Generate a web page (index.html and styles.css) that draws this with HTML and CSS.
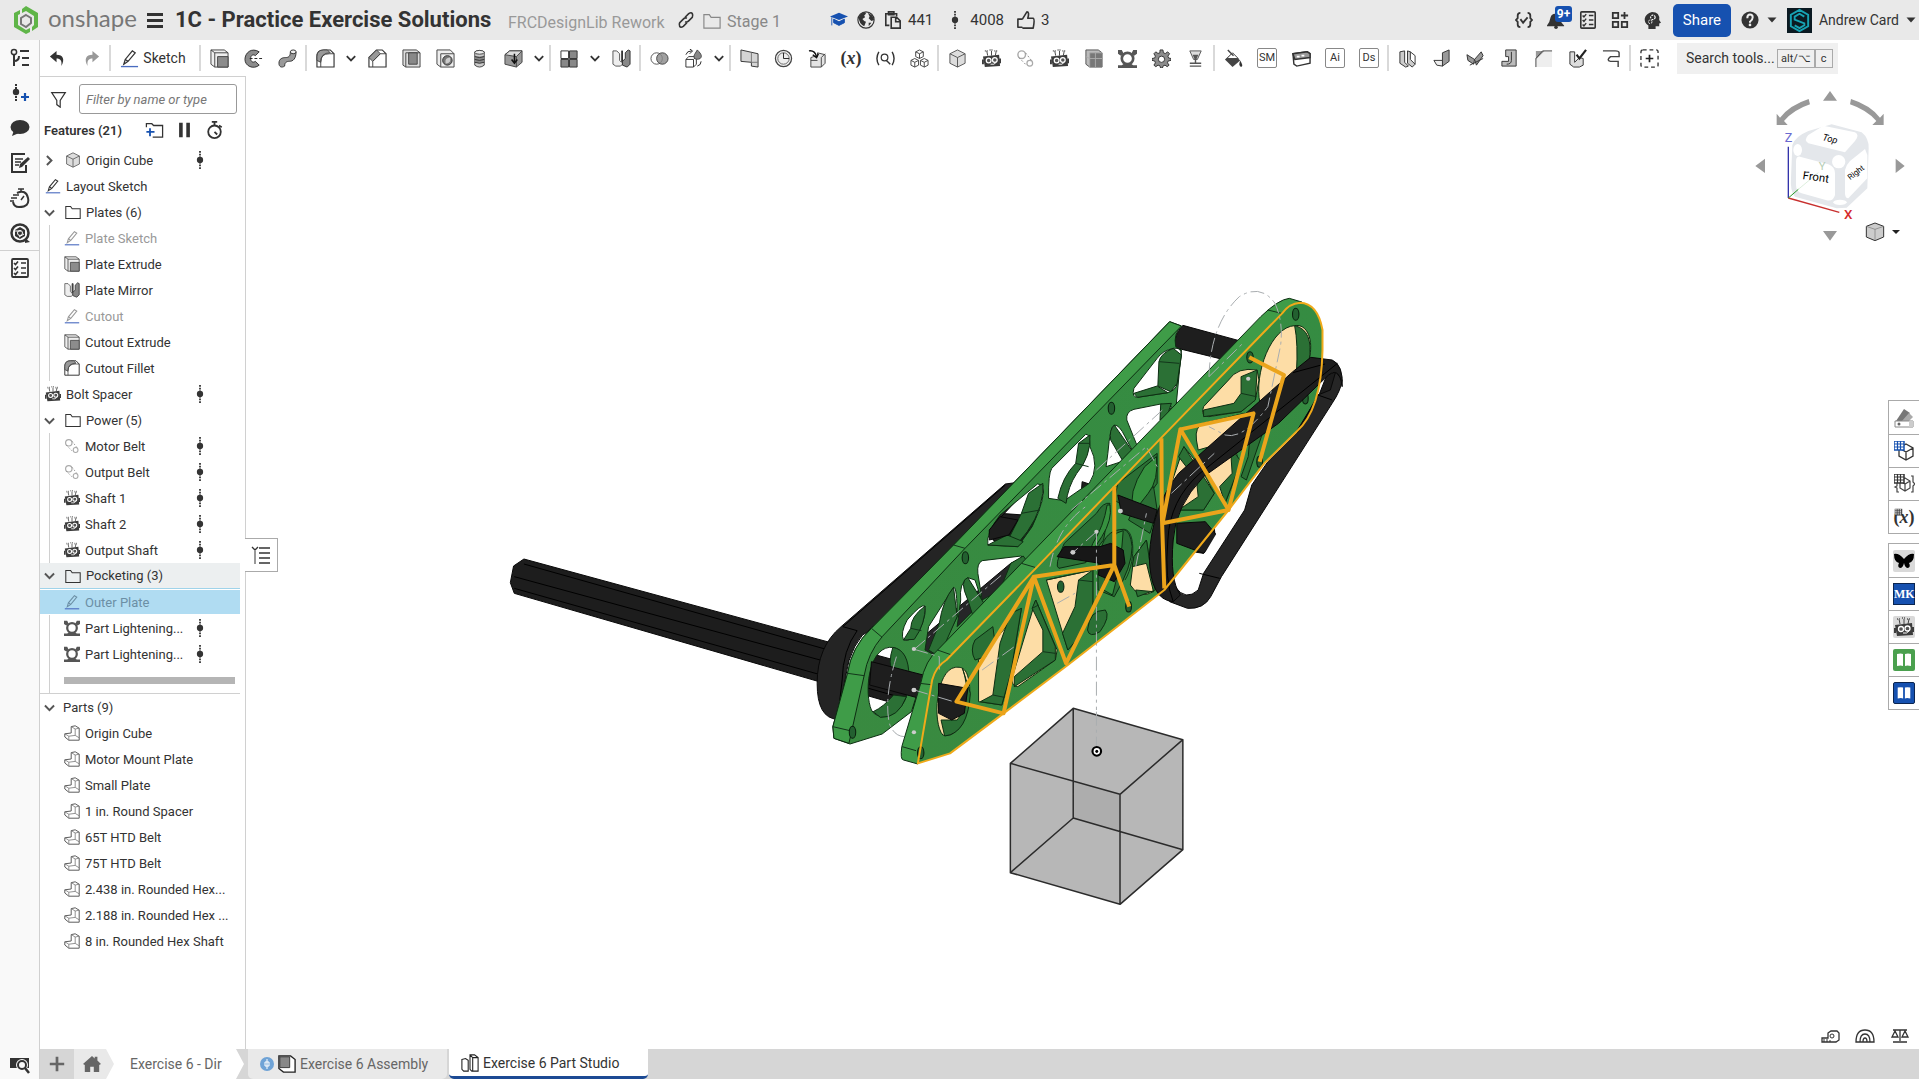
FILE: index.html
```
<!DOCTYPE html>
<html lang="en">
<head>
    <meta charset="UTF-8">
    <meta name="viewport" content="width=device-width, initial-scale=1.0">
    <title>1C - Practice Exercise Solutions</title>
    <link rel="stylesheet" href="styles.css">
</head>
<body>
    <!-- icon set, all on a 20x20 grid -->
    <svg class="sprite" aria-hidden="true">
        <symbol id="undo" viewBox="0 0 20 20"><path d="M9 2 2 8l7 6v-4c4 0 6 2 5 8 4-7 2-12-5-12z" fill="currentColor"/></symbol>
        <symbol id="redo" viewBox="0 0 20 20"><path d="m11 2 7 6-7 6v-4c-4 0-6 2-5 8-4-7-2-12 5-12z" fill="currentColor"/></symbol>
        <symbol id="pencil" viewBox="0 0 20 20"><path d="m4 16 1.500-5L13 2l3 2-7.500 9z M5.500 11l3 2" fill="none" stroke="currentColor" stroke-width="1.300"/><path d="M1 18.500h18" stroke="#4a6cc0" stroke-width="1.400"/></symbol>
        <symbol id="extrude" viewBox="0 0 20 20"><path d="M1 1h14l4 3v15H5l-4-3z" fill="#eee" stroke="#444"/><path d="M5 4h14M5 4v15M1 1l4 3" stroke="#444" fill="none"/><path d="M8 8h11v11H8z" fill="#8c8c8c" stroke="#444"/></symbol>
        <symbol id="revolve" viewBox="0 0 20 20"><path d="M16 3C8-2 1 4 1 11s9 11 15 6l-4-4c-3 2-5 0-5-3s2-5 5-3z" fill="#8c8c8c" stroke="#333"/><path d="M6 10h13" stroke="#222" stroke-dasharray="3 2"/></symbol>
        <symbol id="sweep" viewBox="0 0 20 20"><path d="M1 15c0-5 4-6 7-6s5-1 5-6h6c0 7-3 10-7 10-3 0-5 1-5 5-3 2-6 1-6-3z" fill="#999" stroke="#333"/><ellipse cx="16" cy="3" rx="3" ry="2" fill="#eee" stroke="#333"/></symbol>
        <symbol id="fillet" viewBox="0 0 20 20"><path d="M1 19V8q0-7 7-7h7l4 4v14H5z" fill="#fff" stroke="#333" stroke-width="1.200"/><path d="M1 8q0-7 7-7h4l3 3q-10 0-10 10l-4-2z" fill="#999" stroke="#444"/><path d="M5 19v-6q0-8 9-8h5" fill="none" stroke="#444"/></symbol>
        <symbol id="chamfer" viewBox="0 0 20 20"><path d="M1 19V9l8-8h6l4 4v14H5z" fill="#fff" stroke="#333" stroke-width="1.200"/><path d="m1 9 8-8 4 4-8 8z" fill="#999" stroke="#444"/><path d="M5 19v-6l8-8h6" fill="none" stroke="#444"/></symbol>
        <symbol id="shell" viewBox="0 0 20 20"><path d="M1 1h14l4 3v15H4l-3-2z" fill="#ddd" stroke="#444"/><path d="M4 4h15M4 4v15" stroke="#444"/><path d="M7 4h9v12H7z" fill="#888" stroke="#444"/></symbol>
        <symbol id="hole" viewBox="0 0 20 20"><path d="M1 1h14l4 4v14H5l-4-3z" fill="#eee" stroke="#444"/><path d="M5 5h14M5 5v14" stroke="#444"/><circle cx="12" cy="12" r="5" fill="#777" stroke="#333"/><path d="M10 12q1-3 5-3v4q-2 3-5 2z" fill="#ccc"/></symbol>
        <symbol id="thread" viewBox="0 0 20 20"><path d="M5 3v14q5 4 10 0V3q-5-3-10 0z" fill="#ccc" stroke="#444"/><path d="M5 7q5 2 10 0v7q-5 2-10 0z" fill="#888"/><ellipse cx="10" cy="3.500" rx="5" ry="2" fill="#eee" stroke="#444"/><path d="M5 8q5 2 10 0M5 11q5 2 10 0M5 14q5 2 10 0" fill="none" stroke="#333"/></symbol>
        <symbol id="import" viewBox="0 0 20 20"><path d="m1 6 5-4h13v12l-6 5-12-3z" fill="#999" stroke="#444"/><path d="m1 6 5-4h13l-6 6z" fill="#ddd" stroke="#444"/><path d="M13 8v11" stroke="#444"/><path d="M11 5v9m-3-3 3 4 3-4" fill="none" stroke="#111" stroke-width="1.600"/></symbol>
        <symbol id="pattern" viewBox="0 0 20 20"><path d="M1 2h8v8H1z" fill="#fff" stroke="#333"/><path d="M10 2h8v8h-8zM1 11h8v8H1zM10 11h8v8h-8z" fill="#888" stroke="#333"/></symbol>
        <symbol id="mirror" viewBox="0 0 20 20"><path d="M1 2h4l3 3v7l2 2V2h1v14l-2 2H4l-3-2z" fill="#eee" stroke="#555"/><path d="M11 2v11l3-3V4l3-3 2 1v14l-3 3-5-2z" fill="#888" stroke="#333"/></symbol>
        <symbol id="boolean" viewBox="0 0 20 20"><circle cx="7" cy="10" r="6" fill="#fff" stroke="#555"/><circle cx="13" cy="10" r="6" fill="#888" fill-opacity=".8" stroke="#444"/></symbol>
        <symbol id="transform" viewBox="0 0 20 20"><path d="M2 11h8v8H2zm0 0 3-3h8l-3 3M13 8v8l-3 3" fill="#fff" stroke="#333"/><path d="M14 1c5 5 5 7 3 9-4 2-8 0-6-4z" fill="#888" stroke="#444"/><path d="M2 6q1-4 6-4M6 0l3 2-3 3M18 13q0 4-4 5" fill="none" stroke="#222"/></symbol>
        <symbol id="plane" viewBox="0 0 20 20"><path d="m1 1 18 4v14l-7-1v-4L1 13z" fill="#d5d5d5" stroke="#333"/><path d="M12 4v10h7" fill="none" stroke="#777"/></symbol>
        <symbol id="clock" viewBox="0 0 20 20"><circle cx="10" cy="10" r="8.500" fill="#eee" stroke="#444" stroke-width="1.300"/><circle cx="10" cy="10" r="6" fill="none" stroke="#666"/><path d="M10 4v6h6" fill="none" stroke="#222"/></symbol>
        <symbol id="derive" viewBox="0 0 20 20"><path d="M6 8h4V4l8 2v9l-4 4H3V9z" fill="#e4e4e4" stroke="#444"/><path d="M14 19V9l4-4M3 12h7" stroke="#444" fill="none"/><path d="M1 2q6-1 8 6m-4-2 4 3 2-4" fill="none" stroke="#111" stroke-width="1.500"/></symbol>
        <symbol id="lens" viewBox="0 0 20 20"><path d="M3 3q-4 7 0 14M17 3q4 7 0 14" fill="none" stroke="#333" stroke-width="1.500"/><circle cx="9" cy="9" r="3.500" fill="none" stroke="#333" stroke-width="1.300"/><path d="m11 12 4 4" stroke="#333" stroke-width="1.500"/></symbol>
        <symbol id="cubes" viewBox="0 0 20 20"><path d="m10 1 4 2v5l-4 2-4-2V3zM5 10l4 2v5l-4 2-4-2v-5zM15 10l4 2v5l-4 2-4-2v-5zM6 3l4 2 4-2M10 5v5M1 12l4 2 4-2M5 14v5M11 12l4 2 4-2M15 14v5" fill="none" stroke="#444"/></symbol>
        <symbol id="cube" viewBox="0 0 20 20"><path d="m10 1 8 4v10l-8 4-8-4V5z" fill="#ddd" stroke="#555"/><path d="m2 5 8 4 8-4M10 9v10" fill="none" stroke="#555"/></symbol>
        <symbol id="robot" viewBox="0 0 20 20"><path d="M1 8 18 6l1 12L3 19z" fill="#3c3c3c"/><path d="M0 11h2v5H0zM18 10h2v5h-2z" fill="#3c3c3c"/><path d="M10 2v5M5 2l1 5M15 2l-1 5" stroke="#444"/><path d="M3 2h4M8 1h4M13 2h4" stroke="#777" stroke-dasharray="1 1" stroke-width="2"/><circle cx="7" cy="12" r="2.500" fill="#555" stroke="#fff" stroke-width="1.300"/><circle cx="13.500" cy="11.500" r="2.500" fill="#555" stroke="#fff" stroke-width="1.300"/><path d="M9 16q4 1 6-2" fill="none" stroke="#fff"/></symbol>
        <symbol id="belt" viewBox="0 0 20 20"><circle cx="6" cy="6" r="4" fill="none" stroke="#aaa" stroke-width="1.500"/><circle cx="14.500" cy="15" r="3" fill="none" stroke="#aaa" stroke-width="1.300"/><path d="m10 4 7 9M3 9l8 8" stroke="#888" stroke-dasharray="2 2"/></symbol>
        <symbol id="tube" viewBox="0 0 20 20"><path d="M2 1h13l4 3v15H6l-4-3z" fill="#bbb" stroke="#555"/><path d="M6 4h13v15H6z" fill="#777"/><path d="M6 4h13M6 4v15M2 8l4 2h13M12 4v15" stroke="#aaa" fill="none"/></symbol>
        <symbol id="lighten" viewBox="0 0 20 20"><path d="M0 1h4l2 4-3 2-3-2zM20 1h-4l-2 4 3 2 3-2zM0 20v-3h4l3-2h6l3 2h4v3z" fill="#555"/><circle cx="10" cy="10" r="6" fill="#fff" stroke="#555" stroke-width="2.800"/></symbol>
        <symbol id="gear" viewBox="0 0 20 20"><path d="M8.500 1h3l.5 3 2 .8L16.500 3l2 2-1.800 2.500.8 2 2.500.5v2l-3 .6-.7 2L18 17l-2 1.600-2.300-1.600-2 .8L11 20H9l-.6-2.300-2-.7L4 18.600 2 17l1.600-2.400-.8-2L0 12v-2l2.800-.5.8-2L2 5l2-2 2.300 1.700 2-.7z" fill="#8c8c8c" stroke="#333"/><circle cx="10" cy="10.800" r="3.300" fill="#fff" stroke="#333"/></symbol>
        <symbol id="goblet" viewBox="0 0 20 20"><path d="M4 2h12l-4 9H8z" fill="#ddd" stroke="#555"/><path d="M7 6h6l-3 7z" fill="#555"/><path d="M10 10v5M4 15h12M4 18h12" stroke="#555" stroke-width="1.500"/></symbol>
        <symbol id="paint" viewBox="0 0 20 20"><path d="m1 11 8-7 8 8-8 7z" fill="#444"/><path d="m3 10 6-6 6 6z" fill="#fff" stroke="#444"/><path d="m4 1 6 6" stroke="#444" stroke-width="1.500"/><path d="M17 12q4 6 1 7-3-1-1-7" fill="#333"/></symbol>
        <symbol id="card" viewBox="0 0 20 20"><path d="m1 5 15-2 3 2v10l-14 3-3-2z" fill="#fff" stroke="#333" stroke-width="1.500"/><path d="m1 5 15-2 3 2v4L3 11z" fill="#999" stroke="#333" stroke-width="1.500"/><path d="M5 8h3M10 7h3" stroke="#fff" stroke-width="2"/></symbol>
        <symbol id="sheet1" viewBox="0 0 20 20"><path d="m2 3 5-1v12l4 4-3 1-6-4zM10 2l3 1v8l5 5-3 3-5-4z" fill="#ccc" stroke="#333"/><path d="m13 3 5 4v9" fill="none" stroke="#333"/></symbol>
        <symbol id="sheet2" viewBox="0 0 20 20"><path d="m11 4 7-3v12l-7 5z" fill="#999" stroke="#333"/><path d="m2 12 9 0v6L5 17z" fill="#eee" stroke="#333"/></symbol>
        <symbol id="sheet3" viewBox="0 0 20 20"><path d="m1 6 8 5-1 5-6-4zM9 11l7-8 2 4-7 10z" fill="#999" stroke="#333"/><path d="m4 17 14-7" stroke="#333"/></symbol>
        <symbol id="sheet4" viewBox="0 0 20 20"><path d="M6 1h11v17H2v-5h7V8H6z" fill="#bbb" stroke="#333"/><path d="M12 3v9q0 4-5 4" fill="none" stroke="#333"/></symbol>
        <symbol id="sheet5" viewBox="0 0 20 20"><path d="M2 19V9l7-7h10v17z" fill="#eee"/><path d="M2 2h9l-9 9z" fill="#999"/><path d="M2 19V10l7-8h10" fill="none" stroke="#444"/></symbol>
        <symbol id="sheet6" viewBox="0 0 20 20"><path d="M2 3l5 0v11l5-5 4 1v7l-4 2H6l-4-3z" fill="#ddd" stroke="#333"/><path d="m9 6 3 4 7-9" fill="none" stroke="#222" stroke-width="2.300"/></symbol>
        <symbol id="sheet7" viewBox="0 0 20 20"><path d="M1 2h13q4 0 4 2v4H9q-5 4 0 5h8v6" fill="none" stroke="#444" stroke-width="1.500"/></symbol>
        <symbol id="custom" viewBox="0 0 20 20"><rect x="1" y="1" width="18" height="18" rx="2" fill="none" stroke="#333" stroke-width="1.400" stroke-dasharray="4 3"/><path d="M10 6v8M6 10h8" stroke="#222" stroke-width="1.800"/></symbol>
        <symbol id="down" viewBox="0 0 20 20"><path d="m3 7 7 7 7-7" fill="none" stroke="currentColor" stroke-width="3"/></symbol>
        <symbol id="right" viewBox="0 0 20 20"><path d="m6 3 7 7-7 7" fill="none" stroke="currentColor" stroke-width="3"/></symbol>
        <symbol id="caret" viewBox="0 0 20 20"><path d="M1 5h18l-9 10z" fill="currentColor"/></symbol>
        <symbol id="version" viewBox="0 0 20 20"><path d="M10 0v20" stroke="currentColor" stroke-width="2" stroke-dasharray="2 1"/><circle cx="10" cy="10" r="3.500" fill="currentColor"/></symbol>
        <symbol id="folder" viewBox="0 0 20 20"><path d="M1 3h6l2 3h10v12H1z" fill="none" stroke="currentColor" stroke-width="1.300"/></symbol>
        <symbol id="part" viewBox="0 0 20 20"><path d="M9 2 14 1l5 3v15H6l-5-4v-4l8-1z" fill="#fff" stroke="#555" stroke-width="1.200"/><path d="m9 2 5 3v8l-8 1-5-3M14 5l5-1M6 14v5M14 13l5 3" fill="none" stroke="#777"/></symbol>
        <symbol id="list" viewBox="0 0 20 20"><path d="M10 3h9M12 10h7M12 17h7M4 7v11M4 13q5 0 5-5" fill="none" stroke="currentColor" stroke-width="2"/><circle cx="4" cy="4" r="2.600" fill="none" stroke="currentColor" stroke-width="1.500"/></symbol>
        <symbol id="versionadd" viewBox="0 0 20 20"><path d="M6 1v17" stroke="currentColor" stroke-width="2" stroke-dasharray="2 1"/><circle cx="6" cy="9" r="3.200" fill="currentColor"/><path d="M15 10v8M11 14h8" stroke="#1651b0" stroke-width="2.200"/></symbol>
        <symbol id="comment" viewBox="0 0 20 20"><ellipse cx="10" cy="9" rx="9.500" ry="7" fill="currentColor"/><path d="m4 12-2 6 7-3z" fill="currentColor"/></symbol>
        <symbol id="note" viewBox="0 0 20 20"><path d="M15 1H2v18h14v-7" fill="none" stroke="currentColor" stroke-width="2"/><path d="M5 6h8M5 9h6M5 12h4" stroke="currentColor" stroke-width="1.600"/><path d="m9 15 1-4 8-7 2 2-8 8z" fill="currentColor"/></symbol>
        <symbol id="speed" viewBox="0 0 20 20"><path d="M7 5q9-4 11 5t-9 9q-5 0-6-5" fill="none" stroke="currentColor" stroke-width="2"/><path d="M8 1h6M11 1v3M3 7h6M1 10h6M0 13h4M11 12l3-4" stroke="currentColor" stroke-width="1.500"/></symbol>
        <symbol id="target" viewBox="0 0 20 20"><circle cx="10" cy="10" r="8.500" fill="none" stroke="currentColor" stroke-width="2.500"/><path d="m15 15 5 4-5 1z" fill="currentColor"/><path d="m10 4 5 3v6l-5 3-5-3V7z" fill="currentColor"/><circle cx="10" cy="10" r="2.500" fill="none" stroke="#fff"/><path d="M5 8h6M9 14l5-3" stroke="#fff"/></symbol>
        <symbol id="checklist" viewBox="0 0 20 20"><rect x="2" y="1" width="16" height="18" rx="1" fill="none" stroke="currentColor" stroke-width="1.800"/><path d="M11 5h5M11 10h5M11 15h5M4 5l1.500 1.500L8 3.500M4 10l1.500 1.500L8 8.500M4 15l1.500 1.500L8 13.500" fill="none" stroke="currentColor" stroke-width="1.600"/></symbol>
        <symbol id="find" viewBox="0 0 20 20"><path d="M0 3h19v10H0z" fill="currentColor"/><circle cx="12" cy="10" r="6" fill="#f9f9f9"/><circle cx="12" cy="10" r="4" fill="#f9f9f9" stroke="currentColor" stroke-width="2"/><path d="m15 13 4 5" stroke="currentColor" stroke-width="2.500"/></symbol>
        <symbol id="funnel" viewBox="0 0 20 20"><path d="M2 2h16l-6 9v8l-4-3v-5z" fill="none" stroke="currentColor" stroke-width="1.400"/></symbol>
        <symbol id="folderadd" viewBox="0 0 20 20"><path d="M1 7V3h6l2 2h10v13H8" fill="none" stroke="currentColor" stroke-width="1.400"/><path d="M5 8v9M1 12h9" stroke="#1651b0" stroke-width="2"/></symbol>
        <symbol id="pause" viewBox="0 0 20 20"><path d="M4 2h4v16H4zM12 2h4v16h-4z" fill="currentColor"/></symbol>
        <symbol id="timer" viewBox="0 0 20 20"><circle cx="10" cy="12" r="7" fill="none" stroke="currentColor" stroke-width="2"/><path d="M7 1h6M10 1v4m0 7 3 3m2-10 3 2" stroke="currentColor" stroke-width="2"/></symbol>
        <symbol id="link" viewBox="0 0 20 20"><path d="m9 7 4-4q3-2 4 0t0 4l-4 4q-2 2-4 1m2 1-4 4q-3 2-4 0t0-4l4-4q2-2 4-1" fill="none" stroke="currentColor" stroke-width="1.800"/></symbol>
        <symbol id="grad" viewBox="0 0 20 20"><path d="m10 2 10 4-10 4L0 6z" fill="currentColor"/><path d="M4 9v4l6 3 6-3V9l-6 3zM2 7v9" fill="currentColor" stroke="currentColor"/></symbol>
        <symbol id="globe" viewBox="0 0 20 20"><circle cx="10" cy="10" r="9" fill="none" stroke="currentColor" stroke-width="1.300"/><path d="M2 7q2-5 7-6l1 2-2 2 1 2-3 2 2 2 2 1-2 5Q2 14 2 7zM12 2l5 3 2 5-3 1-3-3 1-2zM13 13l3 0-3 4z" fill="currentColor"/></symbol>
        <symbol id="copy" viewBox="0 0 20 20"><path d="M6 16H2V3h12v3M5 1h6v3H5z" fill="none" stroke="currentColor" stroke-width="1.800"/><path d="M8 7h6l4 4v8H8zM13 7v5h5" fill="none" stroke="currentColor" stroke-width="1.800"/></symbol>
        <symbol id="like" viewBox="0 0 20 20"><path d="M6 9H1v9h5m0-9 5-8q3 0 1 7h6q2 1 0 11H6" fill="none" stroke="currentColor" stroke-width="1.800" stroke-linejoin="round"/></symbol>
        <symbol id="braces" viewBox="0 0 20 20"><path d="M6 2Q3 2 3 5v3l-2 2 2 2v3q0 3 3 3M14 2q3 0 3 3v3l2 2-2 2v3q0 3-3 3M6 9l3 4 5-6" fill="none" stroke="currentColor" stroke-width="2"/></symbol>
        <symbol id="bell" viewBox="0 0 20 20"><path d="M0 16q3-3 4-9 1-4 5-4t5 4q1 6 5 9v1H0z" fill="currentColor"/><circle cx="10" cy="18" r="2" fill="currentColor"/></symbol>
        <symbol id="apps" viewBox="0 0 20 20"><path d="M2 2h6v6H2zM2 12h6v6H2zM12 12h6v6h-6zM15 1v8M11 5h8" fill="none" stroke="currentColor" stroke-width="2"/></symbol>
        <symbol id="head" viewBox="0 0 20 20"><path d="M10 1q9 0 8 9l2 3-2 1v3h-4v3H6v-4Q1 13 2 8t8-7z" fill="currentColor"/><circle cx="11" cy="7" r="2.500" fill="none" stroke="#fff" stroke-width="1.300" stroke-dasharray="2 1"/><circle cx="8" cy="12" r="2" fill="none" stroke="#fff" stroke-dasharray="2 1"/></symbol>
        <symbol id="help" viewBox="0 0 20 20"><circle cx="10" cy="10" r="9.500" fill="currentColor"/><path d="M7 8q0-4 3-4t3 3-3 5v1" fill="none" stroke="#eee" stroke-width="2.200"/><circle cx="10" cy="15.500" r="1.500" fill="#eee"/></symbol>
        <symbol id="home" viewBox="0 0 20 20"><path d="M10 1 0 10l2 1v8h6v-6h4v6h6v-8l2-1-4-4V2h-3v2z" fill="currentColor"/></symbol>
        <symbol id="plus" viewBox="0 0 20 20"><path d="M10 2v16M2 10h16" stroke="currentColor" stroke-width="3"/></symbol>
        <symbol id="assembly" viewBox="0 0 20 20"><path d="M1 1h13l5 4v14H6l-5-4z" fill="#fff" stroke="#222" stroke-width="1.500"/><path d="M2 2h11v12H2z" fill="#888" stroke="#333"/></symbol>
        <symbol id="studio" viewBox="0 0 20 20"><path d="m1 6 4-1 3 2v12H3l-2-2zM10 1h5l4 3v15h-7l-2-2zM10 1l3 3v15M13 4h6" fill="#fff" stroke="#222" stroke-width="1.200"/></symbol>
        <symbol id="gridmark" viewBox="0 0 20 20"><path d="M0 0h10v9H0z" fill="#fff" stroke="currentColor" stroke-width="1.500"/><path d="M0 3h10M0 6h10M3.500 0v9M6.500 0v9" stroke="currentColor" stroke-width="1.200"/></symbol>
        <symbol id="palette" viewBox="0 0 20 20"><path d="m2 13 8-12 6 4-8 9z" fill="#777"/><path d="m8 13 7-8 4 4-5 5z" fill="#aaa"/><path d="M1 13h18v6H1z" fill="#fff" stroke="#888"/><path d="M15 13h4v6h-4z" fill="#ccc"/><circle cx="5" cy="16" r="1.500" fill="#666"/></symbol>
        <symbol id="book" viewBox="0 0 20 20"><path d="M3 4q4-1 6 0v12q-2-1-6 0zM11 4q3-1 6 0v12q-4-1-6 0z" fill="#fff"/></symbol>
        <symbol id="butterfly" viewBox="0 0 20 20"><path d="M10 8Q5 2 0 3q0 8 5 9-2 4 1 5 3 0 4-5 1 5 4 5 3-1 1-5 5-1 5-9-5-1-10 5z" fill="#000"/></symbol>
        <symbol id="tape" viewBox="0 0 20 20"><path d="M8 7l3-2h6l2 2v7l-3 2H2v-4h6z" fill="none" stroke="#333" stroke-width="1.300"/><circle cx="12" cy="10" r="2" fill="none" stroke="#333"/><path d="M4 13v3m3-3v3m3-2v2" stroke="#333"/></symbol>
        <symbol id="protractor" viewBox="0 0 20 20"><path d="M1 16q0-12 9-12t9 12zM5 16q0-8 5-8t5 8M8 16q0-4 2-4t2 4" fill="none" stroke="#333" stroke-width="1.300"/></symbol>
        <symbol id="scale" viewBox="0 0 20 20"><path d="M10 4v11M3 16h14M3 4h14M5 5l-3 6h6zM15 5l-3 6h6z" fill="none" stroke="#333" stroke-width="1.300"/></symbol>
    </svg>

    <header class="topbar">
        <a class="logo" href="#" aria-label="Home">
            <svg width="26" height="28" viewBox="0 0 26 28"><path d="M13 0 25 7v14l-6 4v-4l2-2v-9l-8-5-4 2V3zM7 4v4L5 9v10l8 5 4-2v4l-4 2L1 21V7z" fill="#5fb548"/><path d="m13 9 5 3v5l-5 4-5-3v-6z" fill="none" stroke="#777" stroke-width="2"/></svg>
            <span>onshape</span>
        </a>
        <button class="menu" aria-label="Menu"><i></i><i></i><i></i></button>
        <h1>1C - Practice Exercise Solutions</h1>
        <span class="workspace">FRCDesignLib Rework</span>
        <svg class="icon link"><use href="#link"/></svg>
        <a class="stage" href="#"><svg class="icon"><use href="#folder"/></svg>Stage 1</a>
        <div class="stats">
            <svg class="icon blue"><use href="#grad"/></svg>
            <svg class="icon"><use href="#globe"/></svg>
            <span class="stat"><svg class="icon"><use href="#copy"/></svg>441</span>
            <span class="stat"><svg class="icon"><use href="#version"/></svg>4008</span>
            <span class="stat"><svg class="icon"><use href="#like"/></svg>3</span>
        </div>
        <div class="account">
            <button aria-label="Tasks"><svg class="icon"><use href="#braces"/></svg></button>
            <button class="bell" aria-label="Notifications"><svg class="icon"><use href="#bell"/></svg><b>9+</b></button>
            <button aria-label="Checklist"><svg class="icon"><use href="#checklist"/></svg></button>
            <button aria-label="App store"><svg class="icon"><use href="#apps"/></svg></button>
            <button aria-label="Learning"><svg class="icon"><use href="#head"/></svg></button>
            <button class="share">Share</button>
            <button class="help" aria-label="Help"><svg class="icon"><use href="#help"/></svg><svg class="tiny"><use href="#caret"/></svg></button>
            <button class="user">
                <svg width="25" height="25" viewBox="0 0 26 26"><path d="M0 0h26v26H0z" fill="#0b1a22"/><path d="m13 2 9 5v12l-9 5-9-5V7zM18 9l-5-3-5 3v3l10 4v2l-5 3-5-3" fill="none" stroke="#17a3b4" stroke-width="2"/></svg>
                Andrew Card<svg class="tiny"><use href="#caret"/></svg>
            </button>
        </div>
    </header>

    <div class="app">
        <nav class="rail">
            <button aria-label="Feature list"><svg class="icon"><use href="#list"/></svg></button>
            <button aria-label="Create version"><svg class="icon"><use href="#versionadd"/></svg></button>
            <button aria-label="Comments"><svg class="icon"><use href="#comment"/></svg></button>
            <button aria-label="Notes"><svg class="icon"><use href="#note"/></svg></button>
            <button aria-label="Performance"><svg class="icon"><use href="#speed"/></svg></button>
            <button aria-label="Assistant"><svg class="icon"><use href="#target"/></svg></button>
            <button class="split" aria-label="Checks"><svg class="icon"><use href="#checklist"/></svg></button>
            <button class="last" aria-label="Find tab"><svg class="icon"><use href="#find"/></svg></button>
        </nav>

        <div class="work">
            <div class="toolbar">
                <button aria-label="Undo"><svg class="icon"><use href="#undo"/></svg></button>
                <button class="off" aria-label="Redo"><svg class="icon"><use href="#redo"/></svg></button>
                <hr>
                <button class="sketch"><svg class="icon"><use href="#pencil"/></svg>Sketch</button>
                <hr>
                <button aria-label="Extrude"><svg class="icon"><use href="#extrude"/></svg></button>
                <button aria-label="Revolve"><svg class="icon"><use href="#revolve"/></svg></button>
                <button aria-label="Sweep"><svg class="icon"><use href="#sweep"/></svg></button>
                <hr>
                <button aria-label="Fillet"><svg class="icon"><use href="#fillet"/></svg></button>
                <button class="more" aria-label="More fillets"><svg><use href="#down"/></svg></button>
                <button aria-label="Chamfer"><svg class="icon"><use href="#chamfer"/></svg></button>
                <button aria-label="Shell"><svg class="icon"><use href="#shell"/></svg></button>
                <button aria-label="Hole"><svg class="icon"><use href="#hole"/></svg></button>
                <button aria-label="Thread"><svg class="icon"><use href="#thread"/></svg></button>
                <button aria-label="Move face"><svg class="icon"><use href="#import"/></svg></button>
                <button class="more" aria-label="More faces"><svg><use href="#down"/></svg></button>
                <hr>
                <button aria-label="Pattern"><svg class="icon"><use href="#pattern"/></svg></button>
                <button class="more" aria-label="More patterns"><svg><use href="#down"/></svg></button>
                <button aria-label="Mirror"><svg class="icon"><use href="#mirror"/></svg></button>
                <hr>
                <button aria-label="Boolean"><svg class="icon"><use href="#boolean"/></svg></button>
                <button aria-label="Transform"><svg class="icon"><use href="#transform"/></svg></button>
                <button class="more" aria-label="More transforms"><svg><use href="#down"/></svg></button>
                <hr>
                <button aria-label="Plane"><svg class="icon"><use href="#plane"/></svg></button>
                <button aria-label="Helix"><svg class="icon"><use href="#clock"/></svg></button>
                <button aria-label="Derived"><svg class="icon"><use href="#derive"/></svg></button>
                <button class="variable" aria-label="Variable">(<i>x</i>)</button>
                <button aria-label="Measured variable"><svg class="icon"><use href="#lens"/></svg></button>
                <button aria-label="Composite part"><svg class="icon"><use href="#cubes"/></svg></button>
                <hr>
                <button aria-label="Origin cube"><svg class="icon"><use href="#cube"/></svg></button>
                <button aria-label="Spacer"><svg class="icon"><use href="#robot"/></svg></button>
                <button aria-label="Belt"><svg class="icon"><use href="#belt"/></svg></button>
                <button aria-label="Shaft"><svg class="icon"><use href="#robot"/></svg></button>
                <button aria-label="Tube"><svg class="icon"><use href="#tube"/></svg></button>
                <button aria-label="Part lightening"><svg class="icon"><use href="#lighten"/></svg></button>
                <button aria-label="Gear"><svg class="icon"><use href="#gear"/></svg></button>
                <button aria-label="Bore"><svg class="icon"><use href="#goblet"/></svg></button>
                <hr>
                <button aria-label="Colour"><svg class="icon"><use href="#paint"/></svg></button>
                <button class="letters"><span>SM</span></button>
                <button aria-label="Card"><svg class="icon"><use href="#card"/></svg></button>
                <button class="letters"><span>Ai</span></button>
                <button class="letters"><span>Ds</span></button>
                <hr>
                <button aria-label="Sheet metal model"><svg class="icon"><use href="#sheet1"/></svg></button>
                <button aria-label="Flange"><svg class="icon"><use href="#sheet2"/></svg></button>
                <button aria-label="Hem"><svg class="icon"><use href="#sheet3"/></svg></button>
                <button aria-label="Tab"><svg class="icon"><use href="#sheet4"/></svg></button>
                <button aria-label="Corner"><svg class="icon"><use href="#sheet5"/></svg></button>
                <button aria-label="Finish"><svg class="icon"><use href="#sheet6"/></svg></button>
                <button aria-label="Bend relief"><svg class="icon"><use href="#sheet7"/></svg></button>
                <hr>
                <button aria-label="Custom features"><svg class="icon"><use href="#custom"/></svg></button>
                <div class="search">
                    <input type="text" placeholder="Search tools..." aria-label="Search tools">
                    <kbd>alt/⌥</kbd><kbd>c</kbd>
                </div>
            </div>

            <div class="stagearea">
                <aside class="panel">
                    <div class="filter">
                        <svg class="icon"><use href="#funnel"/></svg>
                        <input type="text" placeholder="Filter by name or type" aria-label="Filter features">
                    </div>
                    <div class="heading">
                        <h2>Features (21)</h2>
                        <button aria-label="New folder"><svg class="icon"><use href="#folderadd"/></svg></button>
                        <button aria-label="Pause"><svg class="icon"><use href="#pause"/></svg></button>
                        <button aria-label="Regeneration times"><svg class="icon"><use href="#timer"/></svg></button>
                    </div>
                    <ul class="tree">
                        <li class="group"><svg class="arrow"><use href="#right"/></svg><svg class="ico"><use href="#cube"/></svg><span>Origin Cube</span><svg class="ver"><use href="#version"/></svg></li>
                        <li class="top"><svg class="ico"><use href="#pencil"/></svg><span>Layout Sketch</span></li>
                        <li class="group"><svg class="arrow"><use href="#down"/></svg><svg class="ico"><use href="#folder"/></svg><span>Plates (6)</span></li>
                        <li class="child dim"><svg class="ico"><use href="#pencil"/></svg><span>Plate Sketch</span></li>
                        <li class="child"><svg class="ico"><use href="#extrude"/></svg><span>Plate Extrude</span></li>
                        <li class="child"><svg class="ico"><use href="#mirror"/></svg><span>Plate Mirror</span></li>
                        <li class="child dim"><svg class="ico"><use href="#pencil"/></svg><span>Cutout</span></li>
                        <li class="child"><svg class="ico"><use href="#extrude"/></svg><span>Cutout Extrude</span></li>
                        <li class="child"><svg class="ico"><use href="#fillet"/></svg><span>Cutout Fillet</span></li>
                        <li class="top"><svg class="ico"><use href="#robot"/></svg><span>Bolt Spacer</span><svg class="ver"><use href="#version"/></svg></li>
                        <li class="group"><svg class="arrow"><use href="#down"/></svg><svg class="ico"><use href="#folder"/></svg><span>Power (5)</span></li>
                        <li class="child"><svg class="ico"><use href="#belt"/></svg><span>Motor Belt</span><svg class="ver"><use href="#version"/></svg></li>
                        <li class="child"><svg class="ico"><use href="#belt"/></svg><span>Output Belt</span><svg class="ver"><use href="#version"/></svg></li>
                        <li class="child"><svg class="ico"><use href="#robot"/></svg><span>Shaft 1</span><svg class="ver"><use href="#version"/></svg></li>
                        <li class="child"><svg class="ico"><use href="#robot"/></svg><span>Shaft 2</span><svg class="ver"><use href="#version"/></svg></li>
                        <li class="child"><svg class="ico"><use href="#robot"/></svg><span>Output Shaft</span><svg class="ver"><use href="#version"/></svg></li>
                        <li class="group hover"><svg class="arrow"><use href="#down"/></svg><svg class="ico"><use href="#folder"/></svg><span>Pocketing (3)</span></li>
                        <li class="child selected"><svg class="ico"><use href="#pencil"/></svg><span>Outer Plate</span></li>
                        <li class="child"><svg class="ico"><use href="#lighten"/></svg><span>Part Lightening...</span><svg class="ver"><use href="#version"/></svg></li>
                        <li class="child"><svg class="ico"><use href="#lighten"/></svg><span>Part Lightening...</span><svg class="ver"><use href="#version"/></svg></li>
                        <li class="child rollback"><i></i></li>
                    </ul>
                    <ul class="tree parts">
                        <li class="group"><svg class="arrow"><use href="#down"/></svg><span>Parts (9)</span></li>
                        <li class="item"><svg class="ico"><use href="#part"/></svg><span>Origin Cube</span></li>
                        <li class="item"><svg class="ico"><use href="#part"/></svg><span>Motor Mount Plate</span></li>
                        <li class="item"><svg class="ico"><use href="#part"/></svg><span>Small Plate</span></li>
                        <li class="item"><svg class="ico"><use href="#part"/></svg><span>1 in. Round Spacer</span></li>
                        <li class="item"><svg class="ico"><use href="#part"/></svg><span>65T HTD Belt</span></li>
                        <li class="item"><svg class="ico"><use href="#part"/></svg><span>75T HTD Belt</span></li>
                        <li class="item"><svg class="ico"><use href="#part"/></svg><span>2.438 in. Rounded Hex...</span></li>
                        <li class="item"><svg class="ico"><use href="#part"/></svg><span>2.188 in. Rounded Hex ...</span></li>
                        <li class="item"><svg class="ico"><use href="#part"/></svg><span>8 in. Rounded Hex Shaft</span></li>
                    </ul>
                </aside>

                <main class="viewport">
                    <button class="drawer" aria-label="Toggle feature list"><svg width="20" height="20" viewBox="0 0 20 20"><path d="m1 2 3 3 3-3M8 3h11M8 8h11M8 13h11M8 18h11" fill="none" stroke="#333" stroke-width="1.300"/><path d="M4 6v13" stroke="#999" stroke-width="2"/></svg></button>

                    <svg class="model" viewBox="-868 -225 3318 2145" preserveAspectRatio="none">
                        <defs>
                            <linearGradient id="face" x1="0" y1="1" x2="1" y2="0"><stop offset="0" stop-color="#398a40"/><stop offset="1" stop-color="#358c42"/></linearGradient>
                        </defs>
                        <!-- long hex shaft -->
                        <g class="dark">
                            <path d="M-773 837 470 1200 460 1300 440 1325-800 940-811 908-802 858z" fill="#1d1d1d"/>
                            <path d="M-773 852 460 1225M-800 890 450 1255M-800 925 440 1300" class="crease"/>
                            <path d="M560 700 1160 745 1165 790 1130 820 880 780 880 900 840 895 540 780z"/>
                            <path d="M790 605 1030 690 1030 810 780 740z"/>
                        </g>
                        <!-- rear belt -->
                        <g class="dark">
                            <path d="M575 612 660 600 520 760 250 1000Q140 1080 130 1180L105 1318Q48 1315 48 1210 48 1100 115 1040z" fill="#242424"/>
                            <path d="M120 1040 160 1052Q120 1110 118 1200L105 1318M575 615 120 1040" class="crease"/>
                            <path d="M175 1065 215 1040 140 1230 125 1240Q125 1130 175 1065z" fill="#fff"/>
                            <path d="M300 1110 590 850 690 800 660 900 450 1080 300 1190z" fill="#262628"/>
                        </g>
                        <!-- top spacer -->
                        <path class="dark" d="M1072 136 1240 185Q1215 200 1210 245L1050 203Q1045 165 1072 136z"/>

                        <!-- rear plate, with cut-outs -->
                        <path fill="url(#face)" stroke="#0d2e12" fill-rule="evenodd" d="M1035 125 1068 138Q1045 160 1052 200L1068 210 1052 390 1010 480 640 870 400 1110 340 1200 312 1295 230 1362 140 1392 95 1375 92 1340 133 1180Q145 1100 200 1045L430 795z
                            M1045 205Q1015 212 1000 235L935 325Q928 352 945 352L1030 338Q1052 332 1056 310L1068 225Q1068 200 1045 205z
                            M1010 372 935 388Q912 395 915 420L945 500 1000 455 1040 380z
                            M880 435Q868 440 862 520L857 560 900 545 935 520 910 470Q895 435 880 435z
                            M800 463 705 565Q695 580 696 655L740 662 810 610Q840 560 812 500 812 460 800 463z
                            M665 612 560 705Q520 760 526 795L610 800 650 740Q690 650 680 615z
                            M620 828 510 842Q495 850 498 880L510 960 560 930 625 850z
                            M430 922 360 1040 350 1110 385 1130 440 1010Q440 920 430 922z
                            M350 978Q340 970 300 1020 280 1060 290 1080 310 1088 335 1050 355 1000 350 978z
                            M470 893Q445 910 450 960L440 1040 510 965 490 900z
                            M250 1102C190 1110 180 1240 200 1290 220 1330 290 1300 300 1240 305 1160 300 1100 250 1102z"/>
                        <path class="edge" d="M1035 125 1068 138 462 805 230 1070Q190 1120 180 1185L137 1390 95 1375 92 1340 133 1180Q145 1100 200 1045L430 795z"/>
                        <path class="line" d="M430 795 462 805M200 1045 230 1072M133 1180 180 1187M92 1340 140 1352"/>
                        <g class="wall">
                            <path d="M1045 205Q1010 220 1005 245L1002 318 1038 335 1056 310 1068 225z"/>
                            <path d="M935 340 1000 318 1030 338 945 352z"/>
                            <path d="M1010 372 1008 420 1030 400 1040 370z"/>
                            <path d="M880 435Q865 450 870 480L905 545 935 520z"/>
                            <path d="M812 465 780 490 772 550Q735 590 722 655L745 670Q750 620 775 580 815 530 812 465z"/>
                            <path d="M680 610 640 640 620 700 580 785 610 790Q670 720 680 640z"/>
                            <path d="M526 795 580 765 625 785 610 800z"/>
                            <path d="M350 978Q310 1010 310 1045L290 1080 320 1078Q352 1030 350 978z"/>
                            <path d="M430 922Q400 960 390 1030L360 1110 390 1130 440 1010z"/>
                            <path d="M470 893Q445 900 470 960L485 1010 515 970z"/>
                            <path d="M260 1102Q245 1150 260 1180L305 1190Q305 1110 260 1102z"/>
                            <path d="M205 1295Q235 1280 262 1245L298 1250Q275 1315 225 1312z"/>
                            <path d="M625 828 590 850 560 930 640 850z"/>
                        </g>
                        <path class="line" d="M780 490 812 490M772 550 808 560M1005 245 1062 250M620 700 672 690M310 1045 340 1052"/>
                        <path class="dark" d="M200 1145 345 1185 335 1255 195 1215z"/>
                        <path class="dark" d="M530 750 560 710 610 720 585 765 530 780z"/>
                        <g class="hole"><ellipse cx="872" cy="385" rx="9" ry="18"/><ellipse cx="463" cy="833" rx="9" ry="18"/><ellipse cx="147" cy="1357" rx="9" ry="18"/></g>
                        <path class="ghost" d="M270 1130Q235 1250 250 1330 270 1390 330 1360L385 1320"/>

                        <!-- front plate -->
                        <path class="edge" d="M1405 66 1370 55Q1340 58 1290 110L620 850 390 1105Q350 1140 338 1210L285 1400Q280 1440 290 1440L330 1452 380 1180 660 865 1350 100z"/>
                        <path class="line" d="M1310 90 1348 100M620 850 658 862M385 1110 425 1125M335 1210 375 1215M286 1400 325 1412"/>
                        <path fill="url(#face)" d="M1400 68Q1450 70 1463 150V210Q1460 390 1390 455L1300 550 1200 690 1020 930 750 1155 570 1300 420 1420 330 1450 370 1200Q380 1160 410 1140L660 865 1010 475 1350 100Q1370 70 1400 68z"/>
                        <!-- pockets: cream where the sketch region shows through -->
                        <g class="pocket">
                            <path d="M1385 137C1320 140 1270 280 1288 370L1350 330 1425 240C1440 180 1420 130 1385 137z"/>
                            <path d="M1280 270Q1225 260 1200 300L1130 380Q1120 410 1145 410L1235 395 1275 360 1285 300z"/>
                            <path d="M1245 400 1130 430Q1105 440 1110 480L1115 510 1180 490 1240 430z"/>
                            <path d="M1215 480 1130 560 1190 670 1230 560z"/>
                            <path d="M1075 500 1120 560 1160 640 1130 690 1060 690 1040 610z"/>
                            <path d="M970 780 935 830 925 915Q950 960 990 935L980 850z"/>
                            <path d="M820 870 690 900 750 1110 790 1060 820 980z"/>
                            <path d="M660 960 720 1110 715 1140 610 1220Q590 1220 595 1190z"/>
                            <path d="M620 985 500 1140 500 1265 565 1275 590 1180z"/>
                            <path d="M435 1162C380 1170 370 1330 400 1365 440 1380 480 1300 475 1220 470 1165 455 1160 435 1162z"/>
                        </g>
                        <g class="wall">
                            <path d="M1385 137Q1440 150 1425 245L1390 280Q1395 190 1385 137z"/>
                            <path d="M1280 270 1235 290 1235 340 1215 370 1130 390 1130 410 1235 395 1275 360z"/>
                            <path d="M1205 500 1210 580 1175 620 1190 670 1235 545z"/>
                            <path d="M1260 470 1295 460 1250 600 1235 590 1255 530z"/>
                            <path d="M1075 500 1060 530 1110 600 1115 650 1060 690 1130 690 1160 640z"/>
                            <path d="M1000 520 890 610 880 660 940 700 1000 610z"/>
                            <path d="M868 670Q850 665 830 700L740 790Q710 860 725 865L800 848 850 780z"/>
                            <path d="M990 620Q930 680 920 720L980 760 1000 690z"/>
                            <path d="M970 780 935 830 930 860 970 850 990 935 940 930 945 950 995 930 980 850z"/>
                            <path d="M820 870 780 900 770 980 735 1060 750 1110 790 1060 820 980z"/>
                            <path d="M660 960 650 985 680 1050 680 1115 600 1190 600 1220 715 1140 715 1100z"/>
                            <path d="M620 985 590 1000 560 1090 540 1245 505 1265 565 1275 590 1180z"/>
                            <path d="M540 1040 490 1080Q475 1110 490 1140L520 1130 545 1080z"/>
                            <path d="M855 990Q810 990 805 1050 810 1075 840 1055 870 1010 855 990z"/>
                            <path d="M905 748C850 750 830 800 835 930L880 950Q930 860 930 800 925 750 905 748z"/>
                            <path d="M455 1165Q485 1260 440 1320L395 1320 405 1368Q470 1360 477 1240z"/>
                        </g>
                        <!-- what is seen behind the open pockets -->
                        <path fill="#36913f" stroke="#0d2e12" d="M965 560Q915 640 935 695L975 640Q1005 600 998 530zM860 675Q850 740 820 790L800 845 845 770Q875 720 868 675zM885 760Q860 830 850 930L875 945Q900 850 905 752z"/>
                        <g class="dark">
                            <path d="M388 1210 470 1225 460 1300 425 1320 388 1300z"/>
                            <path d="M870 790 905 810 910 850 880 905 835 885 840 850 720 830 740 800 840 800z" fill="#171717"/>
                            <path d="M890 645 1000 690 990 730 900 700zM1055 730 1135 725 1170 770 1130 820 1055 790z"/>
                        </g>
                        <path class="line" d="M905 748C940 745 940 850 910 900M820 870 690 900M1245 400 1130 430M1235 340 1278 350M780 900 820 905M680 1115 715 1120M540 1245 572 1252M650 985 668 975"/>
                        <g class="hole"><ellipse cx="1388" cy="103" rx="9" ry="18"/><ellipse cx="1260" cy="232" rx="9" ry="17"/><ellipse cx="730" cy="920" rx="9" ry="17"/><ellipse cx="338" cy="1418" rx="9" ry="18"/><ellipse cx="920" cy="980" rx="8" ry="16"/><ellipse cx="1287" cy="545" rx="8" ry="17"/><ellipse cx="1415" cy="355" rx="8" ry="17"/></g>

                        <!-- front belt -->
                        <path fill="#fff" d="M1175 745 1100 880 1050 910 1080 945 1125 930 1250 690 1200 690z"/>
                        <g class="dark">
                            <path fill="#1c1c1c" d="M1390 455 1455 340 1475 285 1512 270 1500 350 1420 470z"/>
                            <path fill="#262626" d="M1500 275 1518 300Q1515 330 1490 370L1180 890 1150 950Q1130 988 1085 985L1035 965 1050 920Q1080 965 1115 930L1130 880 1245 690 1265 615 1310 545 1395 455 1450 345 1485 330z"/>
                            <path d="M1430 232 1490 240Q1522 255 1518 320 1510 250 1470 295L1340 430 1130 590Q1050 680 1045 780 1035 900 1065 945L1045 965Q980 960 978 830 985 680 1060 580L1380 275z"/>
                            <path class="crease" d="M1505 250 1120 580Q1035 660 1030 780 1020 900 1045 965M1118 880 1175 895M1450 345 1490 360M1380 278 1470 252"/>
                        </g>

                        <!-- construction geometry -->
                        <path class="ghost" d="M1145 290Q1150 130 1230 50 1290 10 1330 70 1355 130 1345 200L1310 380Q1240 480 1190 465L1145 440M1145 290 1240 190M830 570 1020 385M760 690 970 500 1000 560M830 755V1290M700 860Q720 740 800 680M320 1108 570 880M320 1108 390 1130 390 1180M510 1170 600 1100M720 970 770 940M320 1230 430 1265M1040 640 1160 520M940 860 970 700M830 755 765 817"/>
                        <g fill="#ccc"><circle cx="830" cy="755" r="6"/><circle cx="764" cy="817" r="7"/><circle cx="897" cy="693" r="7"/><circle cx="319" cy="1230" r="7"/><circle cx="319" cy="1357" r="6"/><circle cx="319" cy="1107" r="6"/><circle cx="1255" cy="296" r="6"/></g>

                        <!-- selected sketch -->
                        <path class="outline" d="M1400 68Q1450 70 1463 150V210Q1460 390 1390 455L1300 550 1200 690 1020 930 750 1155 570 1300 420 1420 330 1450 370 1200Q380 1160 410 1140L660 865 1010 475 1350 100Q1370 70 1400 68z"/>
                        <path class="truss" d="M1258 232 1355 285 1287 545M1065 448 1270 400 1200 690 1065 448 1015 730 1200 690M1012 475 1013 700 1020 925M880 620V855L922 980M880 855 655 890 745 1150 880 855M655 890 438 1265 570 1300 655 890"/>

                        <!-- origin cube -->
                        <path d="M589 1450 765 1285 1072 1379V1709L896 1873 589 1778z" fill="#b7b7b7"/>
                        <path d="M765 1503 896 1543V1655L765 1614z" fill="#adadad"/>
                        <path class="line cube" d="M589 1450 765 1285 1072 1379V1709L896 1873 589 1778zL896 1543 1072 1379M896 1543V1873M765 1285V1614L589 1778M765 1614 1072 1709"/>
                        <path class="ghost" d="M830 1295V1400"/>
                        <ellipse cx="831" cy="1414" rx="12" ry="13" fill="#fff" stroke="#000" stroke-width="6"/><ellipse cx="831" cy="1414" rx="4" ry="5"/>
                    </svg>

                    <svg class="viewcube" width="179" height="180" viewBox="0 0 537 540">
                        <g fill="#999"><path d="m270 48 21 29h-42zM270 497l21-29h-42zM46 273l29-22v43zM494 273l-27-22v43z"/><path d="M206 72Q150 90 120 128L110 116V150H143L132 138Q160 105 210 88zM333 72Q390 90 420 128L431 116V150H397L409 138Q380 105 330 88z"/></g>
                        <path d="M275 148 365 172Q387 190 386 220L382 340 320 398 290 400 165 365Q150 350 153 310L157 210Q165 185 205 168z" fill="#e4e7eb"/>
                        <path d="M250 152 345 172Q360 180 345 198L315 232 205 205Q190 195 205 180zM180 245 265 268Q285 275 285 295V360Q280 380 260 376L185 355Q168 350 168 330V260Q168 243 180 245zM375 222 382 240V310L325 370Q315 370 315 355V285Q318 270 330 258z" fill="#fff"/>
                        <circle cx="296" cy="260" r="20" fill="#fff"/><ellipse cx="173" cy="225" rx="13" ry="18" fill="#fff"/><ellipse cx="300" cy="382" rx="20" ry="8" fill="#fff"/>
                        <path d="M145 215V369" stroke="#3333aa" stroke-width="4"/><path d="m145 369 153 43" stroke="#c8302f" stroke-width="4"/><path d="m145 369 30-26" stroke="#2a9a2a" stroke-width="3"/><path d="m175 343 60-50" stroke="#9c9"/>
                        <g font-family="Roboto, sans-serif"><text x="187" y="312" font-size="34" transform="rotate(8 187 312)">Front</text><text x="246" y="195" font-size="28" transform="rotate(14 246 195)" font-style="italic">Top</text><text x="331" y="316" font-size="24" transform="rotate(-38 331 316)">Right</text><text x="134" y="202" font-size="38" fill="#6a6ad0">Z</text><text x="312" y="432" font-size="40" font-weight="500" fill="#d52b2b">X</text><text x="236" y="286" font-size="34" fill="#b5cdb5">Y</text></g>
                        <path d="m405 444 26 10v32l-26 11-26-11v-32z" fill="#ccc" stroke="#333" stroke-width="3"/><path d="m379 454 26 9 26-9M405 463v34" fill="none" stroke="#777" stroke-width="2"/><path d="M456 465h24l-12 12z" fill="#222"/>
                    </svg>

                    <div class="sidetabs">
                        <div>
                            <button aria-label="Appearance"><svg class="icon"><use href="#palette"/></svg></button>
                            <button aria-label="Configurations"><svg width="22" height="22" viewBox="0 0 22 22"><path d="m13 4 7 4v8l-7 4-7-4V8zM6 8l7 4 7-4M13 12v8" fill="none" stroke="#333" stroke-width="1.300"/><use href="#gridmark" width="20" height="20" x="1" y="1" color="#1651b0"/></svg></button>
                            <button aria-label="Properties"><svg width="22" height="22" viewBox="0 0 22 22"><path d="m12 5 5 3v7l-5 3-5-3V8zM7 8l5 3 5-3M12 11v7M4 10v3l-2 1 2 1v4h2M18 3h2v6l2 2-2 2v6h-2" fill="none" stroke="#444" stroke-width="1.200"/><use href="#gridmark" width="20" height="20" x="1" y="1" color="#333"/></svg></button>
                            <button class="variable table" aria-label="Variable table">(<i>x</i>)<svg width="14" height="14" viewBox="0 0 20 20"><use href="#gridmark" width="20" height="20" x="1" y="1"/></svg></button>
                        </div>
                        <div>
                            <button aria-label="Butterfly"><svg class="icon tile pale"><use href="#butterfly"/></svg></button>
                            <button aria-label="MKCad"><span class="mk">MK</span></button>
                            <button aria-label="Robot library"><svg class="icon tile pale"><use href="#robot"/></svg></button>
                            <button aria-label="Green library"><svg class="icon tile green"><use href="#book"/></svg></button>
                            <button aria-label="Blue library"><svg class="icon tile navy"><use href="#book"/></svg></button>
                        </div>
                    </div>

                    <div class="measure">
                        <button aria-label="Measure"><svg class="icon"><use href="#tape"/></svg></button>
                        <button aria-label="Angle"><svg class="icon"><use href="#protractor"/></svg></button>
                        <button aria-label="Mass"><svg class="icon"><use href="#scale"/></svg></button>
                    </div>
                </main>
            </div>

            <footer class="tabs">
                <button class="add" aria-label="New tab"><svg class="icon"><use href="#plus"/></svg></button>
                <button class="home" aria-label="All tabs"><svg class="icon"><use href="#home"/></svg></button>
                <button class="crumb">Exercise 6 - Dir</button>
                <button class="tab"><svg class="dot" viewBox="0 0 14 14"><circle cx="7" cy="7" r="7" fill="#6fa3d6"/><path d="M7 2v10M5 5h4v4H5z" stroke="#fff" fill="none"/></svg><svg class="icon"><use href="#assembly"/></svg>Exercise 6 Assembly</button>
                <button class="tab active"><svg class="icon"><use href="#studio"/></svg>Exercise 6 Part Studio</button>
            </footer>
        </div>
    </div>
</body>
</html>
```
FILE: styles.css
```
* {
    box-sizing: border-box;
}
body {
    margin: 0;
    height: 100vh;
    display: flex;
    flex-direction: column;
    font-family: Roboto, "Liberation Sans", sans-serif;
    font-size: 13px;
    color: #333;
    background: #fff;
    overflow: hidden;
}
button {
    display: flex;
    align-items: center;
    justify-content: center;
    padding: 0;
    border: 0;
    background: none;
    font: inherit;
    color: inherit;
}
a {
    color: inherit;
    text-decoration: none;
}
h1, h2, ul {
    margin: 0;
    padding: 0;
}
.sprite {
    position: absolute;
    width: 0;
    height: 0;
}
.icon {
    width: 20px;
    height: 20px;
    flex: none;
}
.tiny {
    width: 10px;
    height: 10px;
}

/* top bar */
.topbar {
    height: 40px;
    flex: none;
    display: flex;
    align-items: center;
    background: #e9e9e9;
    font-size: 16px;
    white-space: nowrap;
}
.logo {
    display: flex;
    align-items: center;
    gap: 9px;
    margin-left: 13px;
    width: 134px;
    font-family: Lato, sans-serif;
    font-size: 24px;
    line-height: 28px;
    color: #777;
}
.logo span {
    margin-top: -4px;
}
.menu {
    width: 16px;
    flex-direction: column;
    gap: 3px;
    margin-right: 12px;
}
.menu i {
    width: 16px;
    height: 3px;
    background: #333;
}
.topbar h1 {
    width: 333px;
    font-size: 22px;
    line-height: 40px;
    font-weight: 700;
}
.workspace {
    width: 169px;
    padding-top: 4px;
    color: #999;
}
.topbar .icon {
    width: 18px;
    height: 18px;
}
.stage {
    display: flex;
    align-items: center;
    gap: 6px;
    width: 127px;
    margin-left: 8px;
    padding-top: 2px;
    color: #888;
}
.stats {
    display: flex;
    align-items: center;
    gap: 9px;
    font-size: 15px;
}
.stat {
    display: flex;
    align-items: center;
    gap: 6px;
    margin-right: 4px;
}
.blue {
    color: #1651b0;
}
.account {
    display: flex;
    align-items: center;
    gap: 14px;
    margin-left: auto;
    margin-right: 3px;
}
.bell {
    position: relative;
}
.bell b {
    position: absolute;
    left: 8px;
    top: -5px;
    width: 17px;
    height: 16px;
    border-radius: 3px;
    background: #1651b0;
    color: #fff;
    font-size: 12px;
    line-height: 16px;
}
.share {
    width: 58px;
    height: 33px;
    margin-left: -2px;
    margin-right: -4px;
    border-radius: 5px;
    background: #1651b0;
    color: #fff;
    font-size: 15px;
}
.help {
    gap: 8px;
    margin-right: -4px;
}
.user {
    gap: 7px;
    font-size: 14px;
}

/* page frame */
.app {
    flex: 1;
    display: flex;
    min-height: 0;
}
.rail {
    width: 40px;
    display: flex;
    flex-direction: column;
    background: #f9f9f9;
    border-right: 1px solid #d0d0d0;
}
.rail button {
    height: 35px;
}
.rail .split {
    border-top: 1px solid #d0d0d0;
}
.rail .last {
    height: 28px;
    margin-top: auto;
}
.work {
    flex: 1;
    min-width: 0;
    display: flex;
    flex-direction: column;
}
.toolbar {
    height: 36px;
    flex: none;
    display: flex;
    align-items: center;
}
.toolbar button {
    width: 34px;
    height: 32px;
    flex: none;
}
.toolbar .icon {
    width: 19px;
    height: 19px;
}
.toolbar hr {
    width: 2px;
    height: 26px;
    margin: 0 1px;
    border: 0;
    background: #d9d9d9;
}
.toolbar .off {
    color: #999;
}
.toolbar .sketch {
    width: 86px;
    gap: 4px;
    padding-right: 4px;
    font-size: 14px;
}
.toolbar .more {
    width: 18px;
}
.more svg {
    width: 12px;
    height: 12px;
}
.variable {
    font-family: "Liberation Serif", serif;
    font-size: 18px;
    font-weight: 700;
}
.letters span {
    width: 20px;
    border: 1px solid #888;
    border-radius: 2px;
    font-size: 11px;
    line-height: 18px;
}
.search {
    display: flex;
    align-items: center;
    width: 161px;
    height: 31px;
    margin-left: 11px;
    padding-left: 9px;
    background: #f0f0f0;
}
.search input {
    width: 91px;
    padding: 0;
    border: 0;
    background: none;
    font: inherit;
    font-size: 14px;
}
.search input::placeholder {
    color: #333;
}
kbd {
    padding: 0 3px;
    border: 1px solid #aaa;
    font-family: inherit;
    font-size: 11px;
    line-height: 17px;
}
kbd + kbd {
    padding: 0 5px;
}
.stagearea {
    flex: 1;
    min-height: 0;
    display: flex;
}

/* feature panel */
.panel {
    width: 206px;
    flex: none;
    border-top: 1px solid #d0d0d0;
    border-right: 1px solid #d0d0d0;
}
.filter {
    display: flex;
    align-items: center;
    gap: 12px;
    padding: 7px 8px 0 10px;
}
.filter .icon {
    width: 17px;
    height: 17px;
}
.filter input {
    flex: 1;
    min-width: 0;
    height: 30px;
    padding: 0 6px;
    border: 1px solid #999;
    border-radius: 3px;
    font: inherit;
    font-style: italic;
}
.filter input::placeholder {
    color: #777;
}
.heading {
    display: flex;
    align-items: center;
    height: 32px;
    margin-bottom: 1px;
    padding-left: 4px;
}
.heading h2 {
    width: 95px;
    font-size: 13px;
    font-weight: 600;
}
.heading button {
    width: 30px;
}
.heading .icon {
    width: 19px;
    height: 18px;
}
.tree {
    list-style: none;
    margin-right: 5px;
}
.tree li {
    display: flex;
    align-items: center;
    height: 26px;
    white-space: nowrap;
}
.tree span {
    flex: 1;
}
.ico {
    width: 16px;
    height: 16px;
    margin-right: 5px;
}
.arrow {
    width: 13px;
    height: 13px;
    margin-right: 9px;
    color: #555;
}
.ver {
    width: 18px;
    height: 18px;
    margin-right: 31px;
}
.tree .group {
    padding-left: 3px;
}
.tree .top {
    padding-left: 5px;
}
.tree .child {
    margin-left: 9px;
    padding-left: 14px;
    border-left: 1px solid #d0d0d0;
}
.dim {
    color: #999;
}
.tree .hover {
    background: linear-gradient(#eceff0, #eceff0) padding-box;
    border-bottom: 1px solid #9fd3ea;
}
.tree .selected {
    height: 24px;
    margin: 1px 0 1px;
    padding-left: 24px;
    border-left: 0;
    background: #b0dcf2;
    color: #6c8fa5;
}
.rollback i {
    width: 171px;
    height: 7px;
    background: #b5b5b5;
}
.parts {
    border-top: 1px solid #d0d0d0;
}
.parts .arrow {
    margin-right: 7px;
}
.tree .item {
    padding-left: 24px;
}

/* 3D view */
.viewport {
    position: relative;
    flex: 1;
    min-width: 0;
    display: flex;
    align-items: center;
    justify-content: center;
}
.model {
    width: 1185px;
    height: 715px;
    flex: none;
}
.model path {
    vector-effect: non-scaling-stroke;
    stroke-linejoin: round;
}
.dark {
    fill: #1e1e1e;
    stroke: #080808;
}
.model .crease {
    fill: none;
    stroke: #000;
}
.edge {
    fill: #3f9c48;
    stroke: #0d2e12;
}
.line {
    fill: none;
    stroke: #12351a;
}
.cube {
    stroke: #2b2b2b;
    stroke-width: 1.5px;
}
.wall {
    fill: #2b7035;
    stroke: #0d2e12;
}
.pocket {
    fill: #fddda6;
    stroke: #0d2e12;
}
.hole {
    fill: #236030;
    stroke: #0a200e;
    stroke-width: 3px;
}
.ghost {
    fill: none;
    stroke: #a9adb0;
    stroke-dasharray: 14 4 3 4;
}
.outline {
    fill: none;
    stroke: #f0aa1a;
    stroke-width: 2px;
}
.truss {
    fill: none;
    stroke: #eba41b;
    stroke-width: 4px;
}
.drawer {
    position: absolute;
    left: -1px;
    top: 462px;
    width: 33px;
    height: 34px;
    background: #fff;
    border: 1px solid #aaa;
    border-left: 0;
}
.viewcube {
    position: absolute;
    top: -1px;
    right: 0;
}
.sidetabs {
    position: absolute;
    right: 0;
    top: 324px;
    display: flex;
    flex-direction: column;
    gap: 9px;
}
.sidetabs div {
    border: 1px solid #aaa;
    border-right: 0;
    background: #fff;
}
.sidetabs button {
    width: 30px;
    height: 33px;
}
.sidetabs button + button {
    border-top: 1px solid #aaa;
}
.table {
    position: relative;
}
.table svg {
    position: absolute;
    left: 5px;
    top: 7px;
}
.tile {
    width: 22px;
    height: 22px;
    padding: 1px;
    border-radius: 2px;
}
.pale {
    background: #d9d9d9;
}
.green {
    background: #4aa04e;
}
.navy {
    background: #1651b0;
    border: 1px solid #0b2550;
}
.mk {
    width: 22px;
    border: 1px solid #0b2550;
    background: #1651b0;
    color: #fff;
    font-family: "Liberation Serif", serif;
    font-size: 12px;
    font-weight: 700;
    line-height: 20px;
}
.measure {
    position: absolute;
    right: 9px;
    bottom: 3px;
    display: flex;
    gap: 15px;
}

/* document tabs */
.tabs {
    height: 30px;
    flex: none;
    display: flex;
    background: #d6d6d6;
    font-size: 14px;
    color: #666;
}
.tabs .icon {
    width: 18px;
    height: 18px;
}
.tabs .add {
    width: 34px;
}
.tabs .home {
    width: 42px;
    margin-right: -10px;
    padding-right: 6px;
    background: #e9e9e9;
    clip-path: polygon(0 0, 34px 0, 100% 50%, 34px 100%, 0 100%);
}
.tabs .crumb {
    width: 138px;
    margin-right: 4px;
    padding-left: 24px;
    justify-content: flex-start;
    background: #fff;
    white-space: nowrap;
    clip-path: polygon(0 0, 130px 0, 100% 50%, 130px 100%, 0 100%, 8px 50%);
}
.tabs .tab {
    width: 199px;
    gap: 4px;
    margin-right: 2px;
    padding-left: 12px;
    justify-content: flex-start;
    border-radius: 0 0 5px 5px;
    background: #e9e9e9;
}
.tabs .active {
    background: #fff;
    border-bottom: 3px solid #1c4a94;
    color: #333;
}
.dot {
    width: 14px;
    height: 14px;
}
```
